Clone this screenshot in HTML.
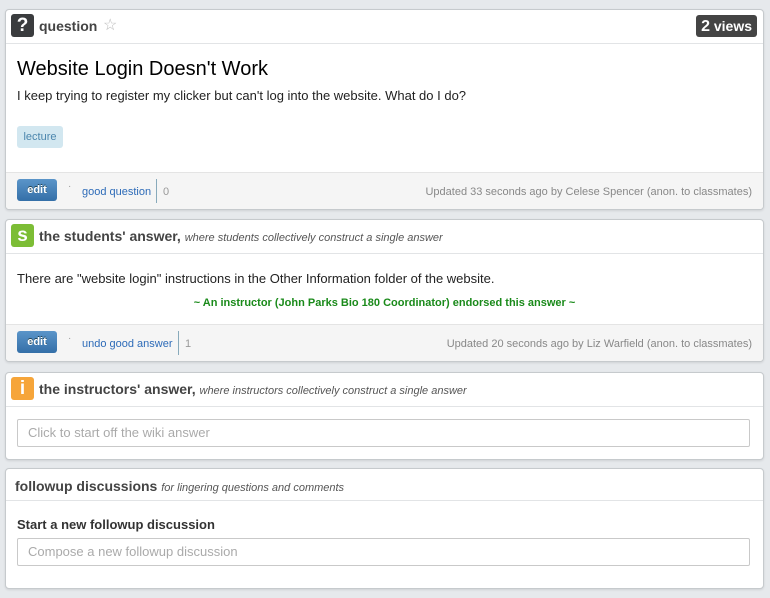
<!DOCTYPE html>
<html><head><style>
body{margin:0;width:770px;height:598px;background:#e6e9ec;font-family:"Liberation Sans",sans-serif;position:relative;overflow:hidden}
.card{position:absolute;left:5px;width:757px;background:#fff;border:1px solid #c6cacd;border-radius:4px;box-shadow:0 1px 2px rgba(0,0,0,.1);overflow:hidden}
.hd{position:absolute;left:0;right:0;top:0;border-bottom:1px solid #e2e4e6}
.ab{position:absolute;white-space:nowrap}
.ico{position:absolute;left:5px;top:4px;width:23px;height:23px;border-radius:3px;color:#fff;font-weight:bold;font-size:19px;text-align:center;line-height:23px}
.ht{font-weight:bold;font-size:14px;color:#444}
.it{font-style:italic;font-size:11px;color:#555}
.ft{position:absolute;left:0;right:0;bottom:0;background:#f5f5f5;border-top:1px solid #e4e4e4}
.btn{position:absolute;left:11px;width:40px;height:22px;border-radius:3px;background:linear-gradient(#5b95c9,#346fa8);color:#fff;font-weight:bold;font-size:11px;text-align:center;line-height:23px;text-shadow:0 -1px 0 #245}
.lk{color:#2d6bb8;font-size:11px}
.inp{position:absolute;left:11px;width:731px;height:26px;border:1px solid #c9c9c9;border-radius:2px;color:#aaa;font-size:13px;line-height:26px;text-indent:10px}
</style></head><body>

<div class="card" style="top:9px;height:199px">
 <div class="hd" style="height:33px">
  <div class="ico" style="background:#3a3c3e;top:4px">?</div>
  <div class="ab ht" style="left:33px;top:8px">question</div>
  <div class="ab" style="left:97px;top:5px;color:#bbb;font-size:16px">☆</div>
  <div class="ab" style="right:6px;top:5px;background:#444;color:#fff;border-radius:3px;padding:0 5px;height:22px;line-height:22px;font-weight:bold;font-size:14px"><span style="font-size:16px">2</span> views</div>
 </div>
 <div class="ab" style="left:11px;top:48px;font-size:20px;color:#000">Website Login Doesn't Work</div>
 <div class="ab" style="left:11px;top:78px;font-size:13px;color:#222">I keep trying to register my clicker but can't log into the website. What do I do?</div>
 <div class="ab" style="left:11px;top:116px;width:46px;height:22px;background:#d2e7f0;border-radius:3px;color:#4b86ad;font-size:11px;text-align:center;line-height:22px">lecture</div>
 <div class="ft" style="height:36px">
  <div class="btn" style="top:6px">edit</div>
  <div class="ab" style="left:62px;top:8px;color:#999;font-size:10px">·</div>
  <div class="ab lk" style="left:76px;top:13px">good question</div>
  <div class="ab" style="left:150px;top:6px;height:24px;border-left:1px solid #8ab"></div>
  <div class="ab" style="left:157px;top:13px;color:#999;font-size:11px">0</div>
  <div class="ab" style="right:11px;top:13px;color:#888;font-size:11px">Updated 33 seconds ago by Celese Spencer (anon. to classmates)</div>
 </div>
</div>

<div class="card" style="top:219px;height:141px">
 <div class="hd" style="height:33px">
  <div class="ico" style="background:#7cbd35">s</div>
  <div class="ab ht" style="left:33px;top:8px">the students' answer, <span class="it" style="font-weight:normal">where students collectively construct a single answer</span></div>
 </div>
 <div class="ab" style="left:11px;top:51px;font-size:13px;color:#222">There are "website login" instructions in the Other Information folder of the website.</div>
 <div class="ab" style="left:0;right:0;top:77px;text-align:center;font-size:11px;font-weight:bold;color:#1a8a1a">~ An instructor (John Parks Bio 180 Coordinator) endorsed this answer ~</div>
 <div class="ft" style="height:36px">
  <div class="btn" style="top:6px">edit</div>
  <div class="ab" style="left:62px;top:8px;color:#999;font-size:10px">·</div>
  <div class="ab lk" style="left:76px;top:13px">undo good answer</div>
  <div class="ab" style="left:172px;top:6px;height:24px;border-left:1px solid #8ab"></div>
  <div class="ab" style="left:179px;top:13px;color:#999;font-size:11px">1</div>
  <div class="ab" style="right:11px;top:13px;color:#888;font-size:11px">Updated 20 seconds ago by Liz Warfield (anon. to classmates)</div>
 </div>
</div>

<div class="card" style="top:372px;height:86px">
 <div class="hd" style="height:33px">
  <div class="ico" style="background:#f6a53a">i</div>
  <div class="ab ht" style="left:33px;top:8px">the instructors' answer, <span class="it" style="font-weight:normal">where instructors collectively construct a single answer</span></div>
 </div>
 <div class="inp" style="top:46px">Click to start off the wiki answer</div>
</div>

<div class="card" style="top:468px;height:119px">
 <div class="hd" style="height:31px">
  <div class="ab ht" style="left:9px;top:9px">followup discussions <span class="it" style="font-weight:normal">for lingering questions and comments</span></div>
 </div>
 <div class="ab" style="left:11px;top:48px;font-size:13px;font-weight:bold;color:#333">Start a new followup discussion</div>
 <div class="inp" style="top:69px">Compose a new followup discussion</div>
</div>
</body></html>
